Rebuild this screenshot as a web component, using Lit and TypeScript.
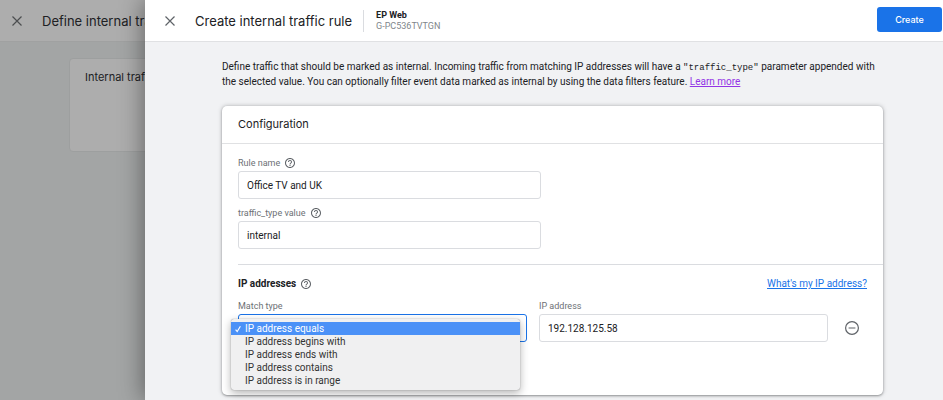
import { LitElement, html, css, svg } from "lit";
import { customElement, state } from "lit/decorators.js";
import { classMap } from "lit/directives/class-map.js";

const closeIcon = html`<svg class="close-icon" viewBox="0 0 10 10" aria-hidden="true">
  ${svg`<path d="M.5 .5 9.5 9.5M9.5 .5 .5 9.5" fill="none" stroke="currentColor" stroke-width="1.2" />`}
</svg>`;

const helpIcon = html`<svg class="help-icon" viewBox="0 0 24 24" role="img" aria-label="Help">
  ${svg`<path fill="currentColor" d="M11 18h2v-2h-2v2zm1-16C6.48 2 2 6.48 2 12s4.48 10 10 10 10-4.480 10-10S17.520 2 12 2zm0 18c-4.410 0-8-3.590-8-8s3.590-8 8-8 8 3.590 8 8-3.590 8-8 8zm0-14c-2.210 0-4 1.790-4 4h2c0-1.100.9-2 2-2s2 .9 2 2c0 2-3 1.750-3 5h2c0-2.250 3-2.500 3-5 0-2.210-1.790-4-4-4z" />`}
</svg>`;

const MATCH_TYPES = [
  "IP address equals",
  "IP address begins with",
  "IP address ends with",
  "IP address contains",
  "IP address is in range",
];

@customElement("app-root")
export class AppRoot extends LitElement {
  @state() private matchType = MATCH_TYPES[0];

  static styles = css`
    :host {
      display: block;
      position: relative;
      min-height: 100vh;
      overflow: hidden;
      box-sizing: border-box;
      background: #a3a5a5;
      color: #202124;
      font: 10px/14px Roboto, sans-serif;
    }
    *, *::before, *::after { box-sizing: border-box; }
    h1, h2, h3, p, ul { margin: 0; padding: 0; font-weight: 400; }
    button, input, select { font: inherit; color: inherit; margin: 0; }
    svg { display: block; }

    .page { position: absolute; inset: 0; }
    .bar {
      display: flex;
      align-items: center;
      height: 42px;
      padding: 0 1px 0 20px;
      background: #fff;
      border-bottom: 1px solid #e0e1e3;
    }
    .page .bar { padding-left: 12px; background: #adadad; border-color: #a0a1a1; }
    .title { font: 13px/20px Inter, sans-serif; white-space: nowrap; }
    .close {
      display: flex;
      padding: 0;
      border: 0;
      background: none;
      color: #5f6368;
      margin-right: 20px;
    }
    .page .close { color: #4c4e50; }
    .close-icon { width: 10px; height: 10px; }
    .page-card {
      margin: 16px 69px;
      height: 94px;
      padding: 11px 15px;
      border: 1px solid #9d9f9f;
      border-radius: 4px;
      background: #adadad;
      font: 11px/14px Inter, sans-serif;
    }

    .drawer {
      position: relative;
      margin-left: 145px;
      min-height: 100vh;
      background: #f1f2f4;
      box-shadow: -2px 0 22px rgba(0, 0, 0, 0.4);
    }
    .property {
      margin-left: 11px;
      padding-left: 12px;
      border-left: 1px solid #dadce0;
      font-size: 9px;
      line-height: 11px;
    }
    .property-name { font-weight: 700; }
    .property-id { color: #80868b; }
    .create {
      width: 65px;
      height: 25px;
      margin: 0 0 2px auto;
      padding: 0;
      border: 0;
      border-radius: 3px;
      background: #1a73e8;
      color: #fff;
      font: 500 9px/14px Inter, sans-serif;
    }

    .content { padding: 18px 60px 4px 77px; }
    .intro code { font: 9px/14px "Liberation Mono", monospace; }
    .visited { color: #9334e6; }

    .card {
      margin-top: 17px;
      background: #fff;
      border-radius: 5px;
      box-shadow: 0 1px 2px rgba(60, 64, 67, 0.4), 0 0 4px rgba(60, 64, 67, 0.35);
    }
    .card-title {
      padding: 11px 16px;
      border-bottom: 1px solid #e0e1e3;
      font: 11px/15px Inter, sans-serif;
    }
    .general { padding: 13px 16px 15px; }
    .field { display: flex; flex-direction: column; min-width: 0; }
    .general .field { width: 303px; max-width: 100%; }
    .field + .field.stacked { margin-top: 8px; }
    .label {
      display: flex;
      align-items: center;
      gap: 4px;
      height: 14px;
      line-height: 12px;
      padding-bottom: 2px;
      color: #6d7175;
      font-size: 9px;
    }
    .help-icon { width: 12px; height: 12px; color: #5f6368; }
    .control {
      width: 100%;
      height: 28px;
      padding: 0 8px;
      border: 1px solid #dadce0;
      border-radius: 3px;
      background: #fff;
      outline: none;
    }
    .ips {
      margin-left: 16px;
      padding: 12px 16px 53px 0;
      border-top: 1px solid #dadce0;
    }
    .ips-head { display: flex; align-items: center; gap: 4px; }
    .ips-title { font: 700 10px/14px Roboto, sans-serif; }
    .ips-link { margin-left: auto; color: #1a73e8; }
    .row { display: flex; gap: 12px; align-items: flex-end; margin-top: 9px; }
    .row .field { flex: 1; }
    .picker { position: relative; }
    .picker .control { display: block; border-color: #1a73e8; appearance: none; }
    .remove {
      display: flex;
      align-items: center;
      width: 27px;
      height: 28px;
      padding: 0 0 0 4px;
      border: 0;
      background: none;
      color: #5f6368;
    }
    .remove svg { width: 16px; height: 16px; }
    .menu {
      position: absolute;
      top: 5px;
      left: -7px;
      width: 100%;
      padding: 3px 0;
      list-style: none;
      background: #f0f0f1;
      border-radius: 3px;
      box-shadow: 0 0 1px rgba(0, 0, 0, 0.5), 0 3px 8px rgba(0, 0, 0, 0.3);
      font: 10px/13px Roboto, sans-serif;
      color: #333;
    }
    .option { display: flex; align-items: center; height: 13px; padding-left: 14px; }
    .option.selected { padding-left: 4px; gap: 4px; background: #4b91f7; color: #fff; }
    .check { width: 6px; height: 8px; }
  `;

  render() {
    return html`
      <div class="page">
        <header class="bar">
          <button class="close" aria-label="Close">${closeIcon}</button>
          <h1 class="title">Define internal traffic</h1>
        </header>
        <div class="page-card">Internal traffic rules</div>
      </div>
      <main class="drawer">
        <header class="bar">
          <button class="close" aria-label="Close">${closeIcon}</button>
          <h1 class="title">Create internal traffic rule</h1>
          <div class="property">
            <div class="property-name">EP Web</div>
            <div class="property-id">G-PC536TVTGN</div>
          </div>
          <button class="create">Create</button>
        </header>
        <div class="content">
          <p class="intro">
            Define traffic that should be marked as internal. Incoming traffic from matching IP addresses will have a
            <code>"traffic_type"</code> parameter appended with the selected value. You can optionally filter event data
            marked as internal by using the data filters feature. <a class="visited" href="#">Learn more</a>
          </p>
          <section class="card">
            <h2 class="card-title">Configuration</h2>
            <div class="general">
              <div class="field">
                <label class="label" for="rule">Rule name ${helpIcon}</label>
                <input class="control" id="rule" value="Office TV and UK" />
              </div>
              <div class="field stacked">
                <label class="label" for="type">traffic_type value ${helpIcon}</label>
                <input class="control" id="type" value="internal" />
              </div>
            </div>
            <div class="ips">
              <div class="ips-head">
                <h3 class="ips-title">IP addresses</h3>
                ${helpIcon}
                <a class="ips-link" href="#">What's my IP address?</a>
              </div>
              <div class="row">
                <div class="field">
                  <label class="label" for="match">Match type</label>
                  <div class="picker">
                    <select class="control" id="match">
                      ${MATCH_TYPES.map((t) => html`<option ?selected=${t === this.matchType}>${t}</option>`)}
                    </select>
                    <ul class="menu" role="listbox" aria-label="Match type">
                      ${MATCH_TYPES.map((t) => this.renderOption(t))}
                    </ul>
                  </div>
                </div>
                <div class="field">
                  <label class="label" for="ip">IP address</label>
                  <input class="control" id="ip" value="192.128.125.58" />
                </div>
                <button class="remove" aria-label="Remove condition">
                  <svg viewBox="0 0 16 16" aria-hidden="true">
                    <path d="M8 1.600a6.400 6.400 0 1 0 0 12.800a6.400 6.400 0 1 0 0-12.800zM4.600 8h6.800" fill="none" stroke="currentColor" stroke-width="1.200" />
                  </svg>
                </button>
              </div>
            </div>
          </section>
        </div>
      </main>
    `;
  }

  private renderOption(type: string) {
    const selected = type === this.matchType;
    return html`<li
      class=${classMap({ option: true, selected })}
      role="option"
      aria-selected=${selected ? "true" : "false"}
      @click=${() => (this.matchType = type)}
    >${selected
        ? html`<svg class="check" viewBox="0 0 6 8" aria-hidden="true">
            <path d="M.6 4.600 2.200 6.600 5.400 1.200" fill="none" stroke="currentColor" stroke-width="1.100" />
          </svg>`
        : null}${type}</li>`;
  }
}
